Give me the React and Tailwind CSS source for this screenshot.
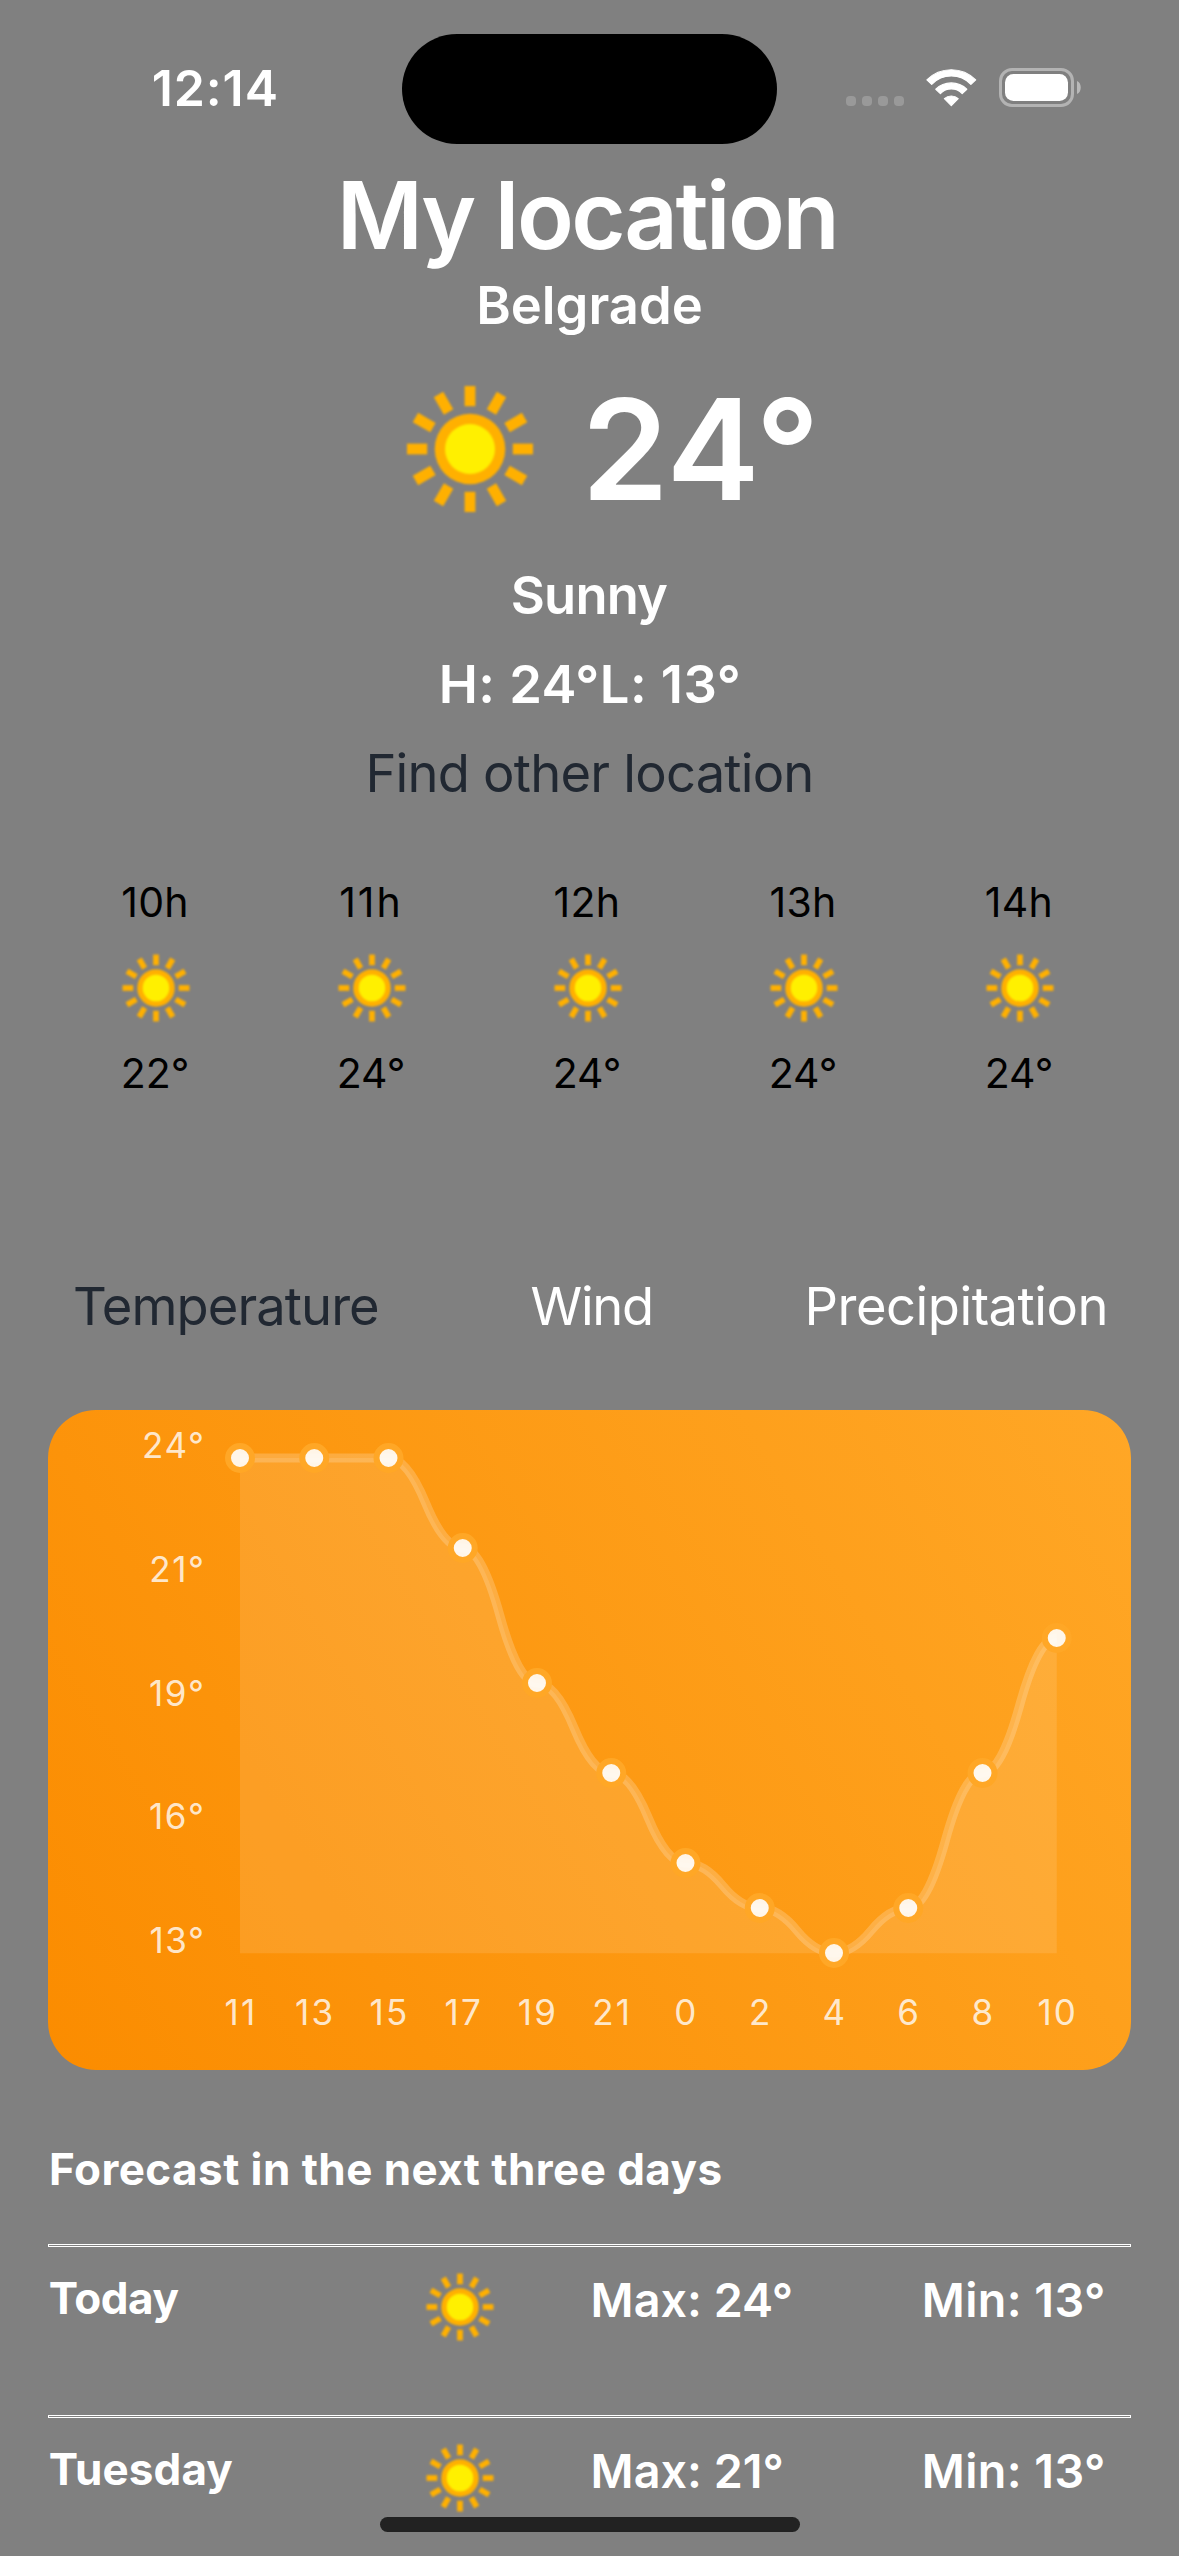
const RAYS = [0, 30, 60, 90, 120, 150, 180, 210, 240, 270, 300, 330];

function Sun({ className }) {
  return (
    <svg viewBox="-96 -96 192 192" className={className} aria-hidden="true">
      {RAYS.map((angle) => (
        <rect key={angle} x="-5.4" y="-63" width="10.8" height="20.2" fill="#ffb000" transform={`rotate(${angle})`} />
      ))}
      <circle r="35.3" fill="#ffb000" />
      <circle r="25" fill="#fff000" />
    </svg>
  );
}

function StatusBar() {
  return (
    <div className="flex h-[160px] items-start pt-[33px]">
      <div className="w-[402px] pl-[151.7px] text-[50px] leading-[110px] font-semibold tracking-[0.9px] text-white">12:14</div>
      <div className="mt-px h-[110px] w-[375px] rounded-full bg-black" />
      <div className="mt-[63px] ml-[69px] flex gap-[6px]">
        {[0, 1, 2, 3].map((dot) => (
          <div key={dot} className="size-[10px] rounded-[4px] bg-white/20" />
        ))}
      </div>
      <svg viewBox="0 0 51 38" className="mt-[36px] ml-[22px] h-[38px] w-[51px]" fill="#fff" stroke="#fff" strokeWidth="1.2" strokeLinejoin="round">
        <path d="M0.9 10.9 A34 33.4 0 0 1 49.7 10.9 L44.9 15.4 A27 27 0 0 0 5.7 15.4 Z" />
        <path d="M9.8 20.2 A21.5 20.6 0 0 1 40.8 20.2 L36.2 24.6 A14.9 14.7 0 0 0 14.4 24.6 Z" />
        <path d="M18.4 29.6 A9.8 9 0 0 1 32.2 29.6 L25.3 36.6 Z" />
      </svg>
      <svg viewBox="0 0 83 40" className="mt-[35px] ml-[22px] h-[40px] w-[83px]">
        <rect x="1.5" y="1.5" width="72" height="36" rx="11.5" fill="none" stroke="#fff" strokeOpacity="0.4" strokeWidth="3" />
        <rect x="6" y="6" width="63" height="27" rx="8.5" fill="#fff" />
        <path d="M78 13 C83 15 83 24 78 26 Z" fill="#fff" fillOpacity="0.45" />
      </svg>
    </div>
  );
}

const HOURS = [
  { hour: "10h", temp: "22°", tracking: "tracking-[0.3px]" },
  { hour: "11h", temp: "24°", tracking: "tracking-[2px]" },
  { hour: "12h", temp: "24°", tracking: "tracking-[0.3px]" },
  { hour: "13h", temp: "24°", tracking: "tracking-[0.3px]" },
  { hour: "14h", temp: "24°", tracking: "tracking-[0.3px]" },
];

function HourlyForecast() {
  return (
    <div className="grid grid-cols-[repeat(5,216px)] pt-[60px] pl-[48px] text-[41px] text-black">
      {HOURS.map(({ hour, temp, tracking }) => (
        <div key={hour} className="flex flex-col items-center">
          <div className={`h-[50px] pr-[2px] leading-[50px] ${tracking}`}>{hour}</div>
          <div className="flex h-[122px] items-center">
            <Sun className="size-[102px] blur-[0.8px]" />
          </div>
          <div className="h-[48px] pr-[2px] leading-[48px]">{temp}</div>
        </div>
      ))}
    </div>
  );
}

const TEMPS = [
  ["11", 24],
  ["13", 24],
  ["15", 24],
  ["17", 22],
  ["19", 19],
  ["21", 17],
  ["0", 15],
  ["2", 14],
  ["4", 13],
  ["6", 14],
  ["8", 17],
  ["10", 20],
];
const POINTS = TEMPS.map(([label, temp], i) => ({ label, x: 192 + i * 74.25, y: 48 + (24 - temp) * 45 }));
const Y_LABELS = ["24°", "21°", "19°", "16°", "13°"];

function smoothLine(points) {
  return points.slice(1).reduce((path, next, i) => {
    const prev = points[i];
    const midX = (prev.x + next.x) / 2;
    const midY = (prev.y + next.y) / 2;
    return `${path} Q ${(midX + prev.x) / 2} ${prev.y} ${midX} ${midY} Q ${(midX + next.x) / 2} ${next.y} ${next.x} ${next.y}`;
  }, `M ${points[0].x} ${points[0].y}`);
}

function TemperatureChart() {
  const line = smoothLine(POINTS);
  return (
    <div className="mx-[48px] mt-[59px] h-[660px] rounded-[48px] bg-[linear-gradient(58.64deg,#fb8c00,#ffa726)]">
      <svg viewBox="0 0 1083 660" className="h-[660px] w-[1083px]">
        <path d={line} fill="none" stroke="#fff" strokeOpacity="0.2" strokeWidth="9" />
        <path d={`${line} L ${POINTS[11].x} 543.3 L ${POINTS[0].x} 543.3 Z`} fill="#fff" fillOpacity="0.11" />
        {POINTS.map(({ label, x, y }) => (
          <g key={label}>
            <circle cx={x} cy={y} r="12" fill="#fff" fillOpacity="0.9" />
            <circle cx={x} cy={y} r="12" fill="none" stroke="#ffa726" strokeWidth="6" />
          </g>
        ))}
        <g className="text-[35px] tracking-[1.6px]" fill="#fff" fillOpacity="0.8">
          {Y_LABELS.map((label, i) => (
            <text key={label} x="157.6" y={47.6 + i * 123.95} textAnchor="end">
              {label}
            </text>
          ))}
        </g>
        <g className="text-[35px] tracking-[2.2px]" fill="#fff" fillOpacity="0.8">
          {POINTS.map(({ label, x }) => (
            <text key={label} x={x + 1} y="615" textAnchor="middle">
              {label}
            </text>
          ))}
        </g>
      </svg>
    </div>
  );
}

const DAYS = [
  { day: "Today", max: "Max: 24°", min: "Min: 13°", tracking: "tracking-[-0.46px]" },
  { day: "Tuesday", max: "Max: 21°", min: "Min: 13°", tracking: "tracking-[0.1px]" },
];

function DailyForecast() {
  return (
    <div className="mx-[48px] text-white">
      <h2 className="h-[174px] pt-[24px] pl-px text-[44px] leading-[150px] font-bold tracking-[0.44px]">Forecast in the next three days</h2>
      {DAYS.map(({ day, max, min, tracking }) => (
        <div key={day} className="h-[171px]">
          <div className="h-[3px] border border-white" />
          <div className="grid grid-cols-[361px_181.6px_331.2px_auto] text-[46.7px] leading-[106px] font-semibold">
            <div className={`pl-[0.8px] text-[44px] leading-[102px] font-bold ${tracking}`}>{day}</div>
            <Sun className="mt-[9px] size-[102px] blur-[0.8px]" />
            <div>{max}</div>
            <div className="tracking-[0.4px]">{min}</div>
          </div>
        </div>
      ))}
    </div>
  );
}

export default function App() {
  return (
    <div className="relative h-[2556px] w-[1179px] overflow-hidden bg-[#808080] font-['Inter',sans-serif]">
      <StatusBar />
      <div className="text-center text-[52.5px] font-semibold text-white">
        <h1 className="pr-[5px] text-[93.5px] leading-[110px] tracking-[-2.45px]">My location</h1>
        <div className="leading-[70px]">Belgrade</div>
        <div className="flex h-[210px] items-center justify-center gap-[15px] pt-[7px] pl-[15px]">
          <Sun className="size-[192px] blur-[1.2px]" />
          <div className="text-[140px] leading-[140px]">24°</div>
        </div>
        <div className="pr-px leading-[90px] tracking-[-0.84px]">Sunny</div>
        <div className="pl-px leading-[89px] tracking-[0.45px]">H: 24°L: 13°</div>
        <div className="leading-[88px] font-normal tracking-[-0.78px] text-[#212832]">Find other location</div>
      </div>
      <HourlyForecast />
      <div className="mt-[164px] flex justify-between pr-[71px] pl-[73px] text-[52.5px] leading-[90px] text-white">
        <div className="tracking-[-0.94px] text-[#212832]">Temperature</div>
        <div className="tracking-[-1.35px]">Wind</div>
        <div className="tracking-[-0.5px]">Precipitation</div>
      </div>
      <TemperatureChart />
      <DailyForecast />
      <div className="absolute bottom-[24px] left-[380px] h-[15px] w-[420px] rounded-full bg-[#222]" />
    </div>
  );
}
